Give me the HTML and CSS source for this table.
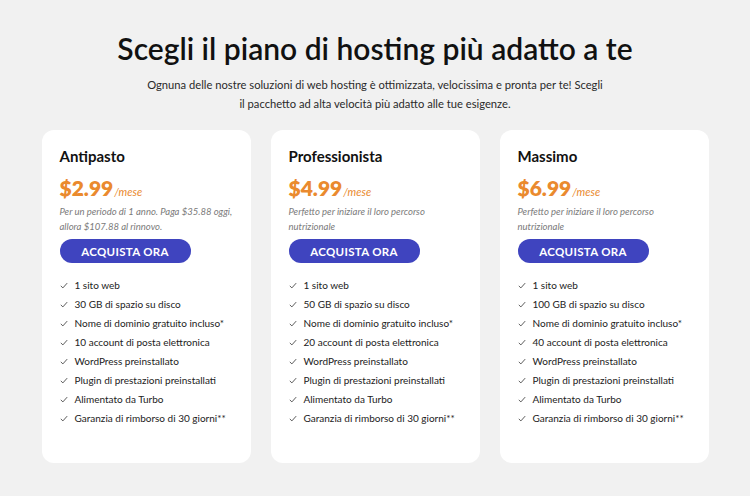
FILE: index.html
```html
<!DOCTYPE html>
<html lang="it">
<head>
<meta charset="utf-8">
<link rel="stylesheet" href="styles.css">
</head>
<body>
<main class="page">
  <h1 class="title">Scegli il piano di hosting più adatto a te</h1>
  <p class="subtitle">Ognuna delle nostre soluzioni di web hosting è ottimizzata, velocissima e pronta per te! Scegli<br>il pacchetto ad alta velocità più adatto alle tue esigenze.</p>
  <section class="plans">
    <article class="card">
      <h2 class="name">Antipasto</h2>
      <div class="price"><span class="amount">$2.99</span><span class="per">/mese</span></div>
      <p class="desc">Per un periodo di 1 anno. Paga $35.88 oggi, allora $107.88 al rinnovo.</p>
      <button class="buy">ACQUISTA ORA</button>
      <ul class="features">
        <li><svg class="chk" viewBox="0 0 10 8"><path d="M1 4.5 L3.6 7 L9 1"/></svg>1 sito web</li>
        <li><svg class="chk" viewBox="0 0 10 8"><path d="M1 4.5 L3.6 7 L9 1"/></svg>30 GB di spazio su disco</li>
        <li><svg class="chk" viewBox="0 0 10 8"><path d="M1 4.5 L3.6 7 L9 1"/></svg>Nome di dominio gratuito incluso*</li>
        <li><svg class="chk" viewBox="0 0 10 8"><path d="M1 4.5 L3.6 7 L9 1"/></svg>10 account di posta elettronica</li>
        <li><svg class="chk" viewBox="0 0 10 8"><path d="M1 4.5 L3.6 7 L9 1"/></svg>WordPress preinstallato</li>
        <li><svg class="chk" viewBox="0 0 10 8"><path d="M1 4.5 L3.6 7 L9 1"/></svg>Plugin di prestazioni preinstallati</li>
        <li><svg class="chk" viewBox="0 0 10 8"><path d="M1 4.5 L3.6 7 L9 1"/></svg>Alimentato da Turbo</li>
        <li><svg class="chk" viewBox="0 0 10 8"><path d="M1 4.5 L3.6 7 L9 1"/></svg>Garanzia di rimborso di 30 giorni**</li>
      </ul>
    </article>
    <article class="card">
      <h2 class="name">Professionista</h2>
      <div class="price"><span class="amount">$4.99</span><span class="per">/mese</span></div>
      <p class="desc">Perfetto per iniziare il loro percorso nutrizionale</p>
      <button class="buy">ACQUISTA ORA</button>
      <ul class="features">
        <li><svg class="chk" viewBox="0 0 10 8"><path d="M1 4.5 L3.6 7 L9 1"/></svg>1 sito web</li>
        <li><svg class="chk" viewBox="0 0 10 8"><path d="M1 4.5 L3.6 7 L9 1"/></svg>50 GB di spazio su disco</li>
        <li><svg class="chk" viewBox="0 0 10 8"><path d="M1 4.5 L3.6 7 L9 1"/></svg>Nome di dominio gratuito incluso*</li>
        <li><svg class="chk" viewBox="0 0 10 8"><path d="M1 4.5 L3.6 7 L9 1"/></svg>20 account di posta elettronica</li>
        <li><svg class="chk" viewBox="0 0 10 8"><path d="M1 4.5 L3.6 7 L9 1"/></svg>WordPress preinstallato</li>
        <li><svg class="chk" viewBox="0 0 10 8"><path d="M1 4.5 L3.6 7 L9 1"/></svg>Plugin di prestazioni preinstallati</li>
        <li><svg class="chk" viewBox="0 0 10 8"><path d="M1 4.5 L3.6 7 L9 1"/></svg>Alimentato da Turbo</li>
        <li><svg class="chk" viewBox="0 0 10 8"><path d="M1 4.5 L3.6 7 L9 1"/></svg>Garanzia di rimborso di 30 giorni**</li>
      </ul>
    </article>
    <article class="card">
      <h2 class="name">Massimo</h2>
      <div class="price"><span class="amount">$6.99</span><span class="per">/mese</span></div>
      <p class="desc">Perfetto per iniziare il loro percorso nutrizionale</p>
      <button class="buy">ACQUISTA ORA</button>
      <ul class="features">
        <li><svg class="chk" viewBox="0 0 10 8"><path d="M1 4.5 L3.6 7 L9 1"/></svg>1 sito web</li>
        <li><svg class="chk" viewBox="0 0 10 8"><path d="M1 4.5 L3.6 7 L9 1"/></svg>100 GB di spazio su disco</li>
        <li><svg class="chk" viewBox="0 0 10 8"><path d="M1 4.5 L3.6 7 L9 1"/></svg>Nome di dominio gratuito incluso*</li>
        <li><svg class="chk" viewBox="0 0 10 8"><path d="M1 4.5 L3.6 7 L9 1"/></svg>40 account di posta elettronica</li>
        <li><svg class="chk" viewBox="0 0 10 8"><path d="M1 4.5 L3.6 7 L9 1"/></svg>WordPress preinstallato</li>
        <li><svg class="chk" viewBox="0 0 10 8"><path d="M1 4.5 L3.6 7 L9 1"/></svg>Plugin di prestazioni preinstallati</li>
        <li><svg class="chk" viewBox="0 0 10 8"><path d="M1 4.5 L3.6 7 L9 1"/></svg>Alimentato da Turbo</li>
        <li><svg class="chk" viewBox="0 0 10 8"><path d="M1 4.5 L3.6 7 L9 1"/></svg>Garanzia di rimborso di 30 giorni**</li>
      </ul>
    </article>
  </section>
</main>
</body>
</html>
```
FILE: styles.css
```css
* { box-sizing: border-box; }
html, body { margin: 0; padding: 0; }
body {
  width: 750px;
  height: 496px;
  overflow: hidden;
  background: #f1f1f1;
  font-family: "Lato", "Noto Sans", sans-serif;
  color: #111;
}
.page {
  padding-top: 29px;
  display: flex;
  flex-direction: column;
  align-items: center;
}
.title {
  margin: 0;
  font-size: 30px;
  line-height: 38px;
  font-weight: 600;
  color: #111;
}
.subtitle {
  margin: 8px 0 0;
  font-size: 11.2px;
  line-height: 19px;
  text-align: center;
  color: #2a2a2a;
}
.plans {
  margin-top: 17px;
  display: flex;
  gap: 20px;
}
.card {
  width: 209px;
  height: 333px;
  background: #fff;
  border-radius: 12px;
  padding: 16px 18px 0;
}
.name {
  margin: 0;
  font-size: 15px;
  line-height: 20px;
  font-weight: 700;
  color: #111;
}
.price {
  margin-top: 10px;
  display: flex;
  align-items: baseline;
  color: #ea8a2e;
}
.amount {
  font-size: 21px;
  line-height: 24px;
  font-weight: 800;
}
.per {
  font-size: 11px;
  font-style: italic;
  margin-left: 1px;
}
.desc {
  margin: 4px 0 0;
  font-size: 9.5px;
  line-height: 15px;
  font-style: italic;
  color: #7a7a7a;
}
.buy {
  margin-top: 5px;
  display: block;
  width: 131px;
  height: 24px;
  border: none;
  border-radius: 12px;
  background: #3f44bf;
  color: #fff;
  font-family: inherit;
  font-size: 11.5px;
  font-weight: 700;
  letter-spacing: 0.3px;
  padding: 0;
}
.features {
  list-style: none;
  margin: 13px 0 0;
  padding: 0;
}
.features li {
  display: flex;
  align-items: center;
  font-size: 10px;
  line-height: 19px;
  color: #222;
}
.chk {
  width: 8px;
  height: 7px;
  margin-right: 7px;
  fill: none;
  stroke: #444;
  stroke-width: 1.1;
}
```
